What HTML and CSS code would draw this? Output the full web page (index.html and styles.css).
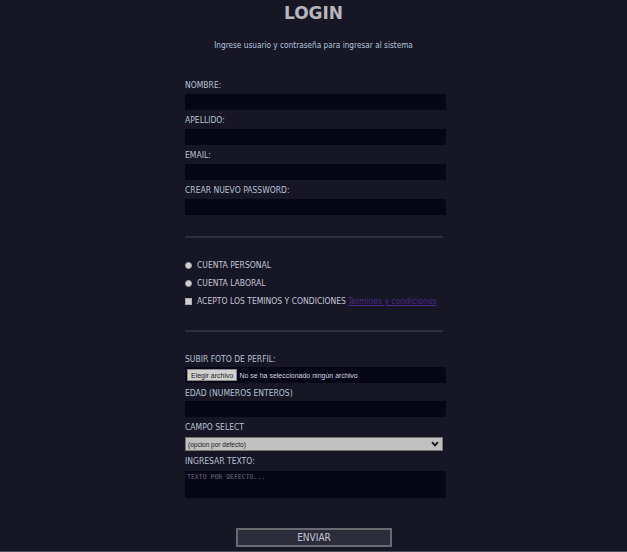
FILE: index.html
```html
<!DOCTYPE html>
<html lang="es">
<head>
<meta charset="utf-8">
<title>Login</title>
<link rel="stylesheet" href="styles.css">
</head>
<body>
<main class="page">
  <h1 class="title">LOGIN</h1>
  <p class="subtitle">Ingrese usuario y contraseña para ingresar al sistema</p>
  <form class="form">
    <div class="group">
      <label class="label">NOMBRE:</label>
      <input class="field" type="text">
    </div>
    <div class="group">
      <label class="label">APELLIDO:</label>
      <input class="field" type="text">
    </div>
    <div class="group">
      <label class="label">EMAIL:</label>
      <input class="field" type="text">
    </div>
    <div class="group">
      <label class="label">CREAR NUEVO PASSWORD:</label>
      <input class="field" type="password">
    </div>
    <hr class="rule rule-one">
    <div class="options">
      <div class="option"><span class="radio"></span><span>CUENTA PERSONAL</span></div>
      <div class="option"><span class="radio"></span><span>CUENTA LABORAL</span></div>
      <div class="option"><span class="check"></span><span>ACEPTO LOS TEMINOS Y CONDICIONES</span><a class="link" href="#">Terminos y condiciones</a></div>
    </div>
    <hr class="rule rule-two">
    <div class="group2">
      <label class="label">SUBIR FOTO DE PERFIL:</label>
      <div class="file"><span class="file-btn">Elegir archivo</span><span class="file-text">No se ha seleccionado ningún archivo</span></div>
    </div>
    <div class="group2">
      <label class="label">EDAD (NUMEROS ENTEROS)</label>
      <input class="field" type="text">
    </div>
    <div class="group2">
      <label class="label">CAMPO SELECT</label>
      <div class="select"><span>(opcion por defecto)</span>
        <svg class="chev" width="8" height="6" viewBox="0 0 8 6"><path d="M1 1.2 L4 4.4 L7 1.2" fill="none" stroke="#111" stroke-width="1.7"/></svg>
      </div>
    </div>
    <div class="group2">
      <label class="label">INGRESAR TEXTO:</label>
      <textarea class="area" placeholder="TEXTO POR DEFECTO..."></textarea>
    </div>
    <div class="actions">
      <button class="submit" type="button">ENVIAR</button>
    </div>
  </form>
</main>
</body>
</html>
```
FILE: styles.css
```css
html, body {
  margin: 0;
  padding: 0;
  background: #161625;
  height: 552px;
  overflow: hidden;
}
body {
  font-family: "DejaVu Sans Condensed", "DejaVu Sans", Verdana, sans-serif;
  font-stretch: semi-condensed;
  color: #c4c8d4;
  box-sizing: border-box;
  border-bottom: 1px solid #4e4e5c;
}
.page {
  display: flex;
  flex-direction: column;
  align-items: center;
}
.title {
  margin: 4px 0 0;
  font-family: "DejaVu Sans", Verdana, sans-serif;
  font-stretch: normal;
  font-size: 17px;
  line-height: 18px;
  font-weight: bold;
  color: #b6b6bc;
}
.subtitle {
  margin: 18px 0 0;
  font-size: 8.2px;
  line-height: 10px;
  color: #b4c6dc;
}
.form {
  width: 261px;
  margin: 29px 0 0 4px;
  display: flex;
  flex-direction: column;
}
.group {
  display: flex;
  flex-direction: column;
  gap: 3px;
  margin-bottom: 4px;
}
.group:nth-of-type(4) {
  margin-bottom: 0;
}
.group2 {
  display: flex;
  flex-direction: column;
  gap: 2px;
  margin-bottom: 4px;
}
.label {
  font-size: 8.5px;
  line-height: 12px;
  color: #b8c2d4;
}
.field {
  display: block;
  height: 16px;
  box-sizing: border-box;
  background: #060616;
  border: none;
  margin: 0;
  padding: 0;
}
.rule {
  width: 258px;
  margin: 21px 0 0;
  border: none;
  height: 2px;
  background: #2e2e3e;
  align-self: flex-start;
}
.options {
  display: flex;
  flex-direction: column;
  gap: 6px;
  margin-top: 21px;
}
.option {
  display: flex;
  align-items: center;
  font-size: 8.5px;
  line-height: 12px;
  color: #c4c8d4;
  white-space: nowrap;
}
.radio {
  flex-shrink: 0;
  width: 7px;
  height: 7px;
  box-sizing: border-box;
  border-radius: 50%;
  background: #cfcfd2;
  border: 1px solid #a8a8ae;
  margin: 0 5px 0 0;
}
.check {
  flex-shrink: 0;
  width: 7px;
  height: 7px;
  box-sizing: border-box;
  background: #cfcfd2;
  border: 1px solid #a8a8ae;
  margin: 0 5px 0 0;
}
.link {
  color: #4a2a8a;
  margin-left: 2px;
}
.rule-two {
  margin-top: 23px;
  margin-bottom: 21px;
}
.file {
  height: 16px;
  background: #060616;
  display: flex;
  align-items: center;
  font-family: "Liberation Sans", Arial, sans-serif;
  font-stretch: normal;
  font-size: 7px;
}
.file-btn {
  margin-left: 2px;
  height: 12px;
  padding: 0 3px;
  background: #d0d0d0;
  color: #222;
  border: 1px solid #888;
  box-sizing: border-box;
  display: flex;
  align-items: center;
}
.file-text {
  margin-left: 2px;
  color: #d8d8e0;
}
.select {
  width: 258px;
  height: 14px;
  box-sizing: border-box;
  background: #c0c0c0;
  border: 1px solid #777;
  display: flex;
  align-items: center;
  justify-content: space-between;
  padding: 0 3px 0 2px;
  margin-top: 2px;
  font-family: "Liberation Sans", Arial, sans-serif;
  font-stretch: normal;
  font-size: 6.5px;
  color: #222;
}
.area {
  display: block;
  height: 27px;
  box-sizing: border-box;
  background: #060616;
  border: none;
  padding: 2px;
  margin: 2px 0 0;
  resize: none;
  font-family: "DejaVu Sans Mono", monospace;
  font-size: 6.5px;
  color: #888;
}
.area::placeholder {
  color: #6a6a7a;
}
.actions {
  display: flex;
  justify-content: center;
  margin-top: 26px;
}
.submit {
  width: 156px;
  height: 19px;
  background: #2c2c3a;
  border: 2px solid #6a6a72;
  color: #c4c8d4;
  font-family: "DejaVu Sans Condensed", "DejaVu Sans", sans-serif;
  font-stretch: semi-condensed;
  font-size: 10px;
  line-height: 13px;
  padding: 0 0 1px;
  margin-left: -3px;
}
```
